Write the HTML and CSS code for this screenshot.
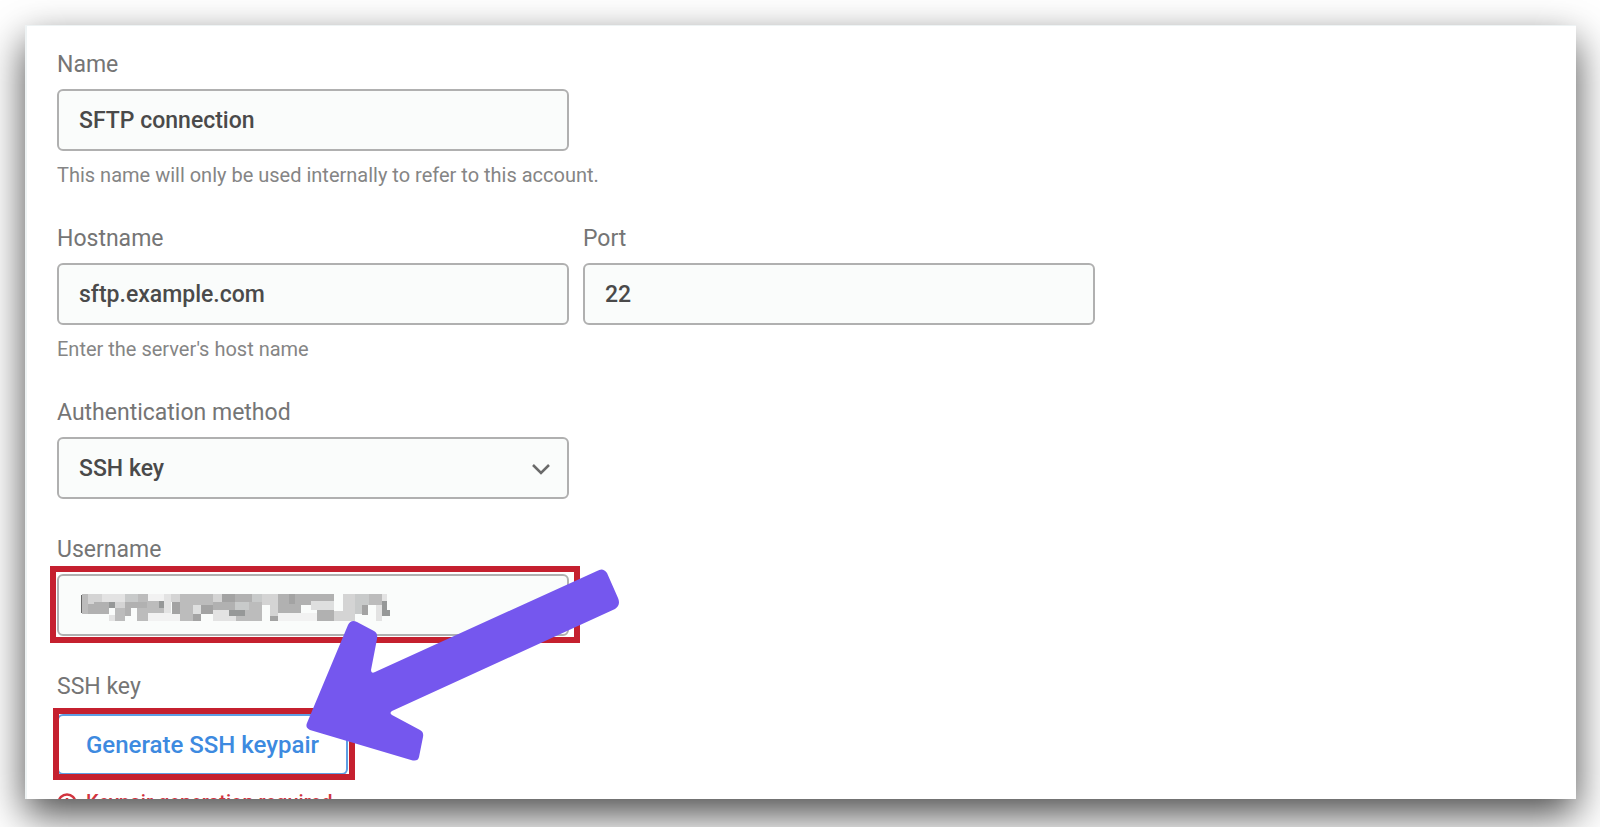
FILE: index.html
```
<!DOCTYPE html>
<html lang="en">
<head>
  <meta charset="utf-8">
  <title>SFTP connection</title>
  <link rel="stylesheet" href="styles.css">
</head>
<body>
  <form class="card">
    <div class="field">
      <label for="name">Name</label>
      <input class="control" id="name" type="text" value="SFTP connection">
      <p class="help">This name will only be used internally to refer to this account.</p>
    </div>
    <div class="row">
      <div class="field">
        <label for="hostname">Hostname</label>
        <input class="control" id="hostname" type="text" value="sftp.example.com">
        <p class="help">Enter the server's host name</p>
      </div>
      <div class="field">
        <label for="port">Port</label>
        <input class="control" id="port" type="text" value="22">
      </div>
    </div>
    <div class="field">
      <label for="auth">Authentication method</label>
      <div class="select">
        <select class="control" id="auth">
          <option>SSH key</option>
        </select>
        <svg class="chevron" width="20" height="12" viewBox="0 0 20 12"><path d="M2 2l8 8 8-8" fill="none" stroke="#6a6a6a" stroke-width="2.5"/></svg>
      </div>
    </div>
    <div class="field">
      <label for="username">Username</label>
      <div class="marked">
        <input class="control" id="username" type="text">
        <!-- pixelated user name -->
        <svg class="redacted" width="310" height="28" viewBox="60 71 930 84" shape-rendering="crispEdges">
          <path fill="#666" d="M62 73h6v56h-6z"/>
          <path fill="#f2f2f2" d="M263 71h50v20h-50zM263 129h97v22h-97zM654 129h117v22H654z"/>
          <path fill="#e3e3e3" d="M125 71h70v24h-70zM147 134h18v19h-18zM313 71h20v58h-20zM458 119h70v34h-70zM947 103h18v50h-18zM965 71h17v20h-17z"/>
          <path fill="#d4d4d4" d="M85 71h40v31H85zM165 95h30v18h-30zM333 71h30v24h-30zM458 71h28v24h-28zM606 71h48v32h-48zM630 103h24v34h-24zM821 122h64v31h-64zM849 71h36v60h-36z"/>
          <path fill="#c8caca" d="M195 71h38v24h-38zM576 71h30v24h-30zM526 95h50v24h-50zM885 71h42v33h-42zM885 104h20v27h-20z"/>
          <path fill="#bcbcbc" d="M67 71h18v61H67zM127 113h20v19h-20zM165 113h30v40h-30zM233 71h30v24h-30zM231 113h32v40h-32zM261 91h52v38h-52zM360 71h98v34h-98zM360 105h64v48h-64zM568 95h38v58h-38zM528 137h40v16h-40zM556 119h12v18h-12zM927 71h38v32h-38z"/>
          <path fill="#b1b1b1" d="M85 102h62v29H85zM103 95h44v8h-44zM195 95h66v19h-66zM195 113h18v23h-18zM458 95h68v24h-68zM526 71h50v24h-50zM654 71h50v58h-50zM704 71h117v22H704zM704 93h18v36h-18zM722 93h30v12h-30zM771 120h50v33h-50z"/>
          <path fill="#a3a3a3" d="M336 95h24v35h-24zM400 131h24v22h-24zM424 105h34v26h-34zM486 71h40v24h-40zM630 137h24v16h-24zM686 71h18v30h-18zM905 104h20v29h-20z"/>
          <path fill="#969898" d="M147 95h18v18h-18zM296 91h16v22h-16zM508 119h48v18h-48zM965 91h17v46h-17zM981 118h9v19h-9z"/>
          <path fill="#dedfdf" d="M400 103h24v28h-24zM752 93h70v27h-70z"/>
        </svg>
      </div>
    </div>
    <div class="field">
      <label for="generate">SSH key</label>
      <div class="marked marked-button">
        <button class="generate" id="generate" type="button">Generate SSH keypair</button>
      </div>
      <p class="error">
        <svg width="20" height="20" viewBox="0 0 20 20"><circle cx="10" cy="10" r="8.5" fill="none" stroke="#d2343f" stroke-width="2.5"/><path d="M10 5v6M10 13v2" stroke="#d2343f" stroke-width="2.5"/></svg>
        Keypair generation required
      </p>
    </div>
    <svg class="arrow" width="320" height="204" viewBox="300 560 320 204">
      <path fill="#7557ee" d="M597 571Q603 567 607 573L618 598Q621 605 615 609L392 711Q389 713 392 715L420 730Q424 732 423 737L419 757Q418 762 411 760L310 730Q305 728 307 723L348 625Q351 619 357 622L374 631Q378 633 377 639L371 670Q371 674 375 672Z"/>
    </svg>
  </form>
</body>
</html>
```
FILE: styles.css
```
* {
  box-sizing: border-box;
}
body {
  margin: 0;
  height: 100vh;
  padding: 25px 24px 28px 25px;
  overflow: hidden;
  background: #fff;
  font-family: Roboto, "Liberation Sans", sans-serif;
}
.card {
  position: relative;
  height: 100%;
  padding: 26px 32px 0;
  overflow: hidden;
  background: #fff;
  box-shadow: 0 16px 38px rgba(0, 0, 0, 0.7), inset 2px 1px #eef3f4;
}
.row {
  display: flex;
  gap: 14px;
}
.field {
  width: 512px;
  margin-bottom: 37px;
}
label {
  display: block;
  margin-bottom: 10px;
  font-size: 23px;
  line-height: 28px;
  color: #757575;
}
.control {
  display: block;
  width: 100%;
  height: 62px;
  padding: 0 20px;
  border: 2px solid #b0b0b0;
  border-radius: 6px;
  background: #fafcfb;
  color: #4a4a4a;
  font: 500 23px Roboto, "Liberation Sans", sans-serif;
  appearance: none;
}
.help {
  margin: 12px 0 0;
  font-size: 20px;
  line-height: 25px;
  white-space: nowrap;
  color: #858585;
}
.select,
.marked {
  position: relative;
}
.chevron {
  position: absolute;
  right: 18px;
  top: 26px;
}
/* red frame around the control */
.marked::after {
  content: "";
  position: absolute;
  top: -8px;
  right: -11px;
  bottom: -7px;
  left: -7px;
  border: 6px solid #c5202f;
}
.redacted {
  position: absolute;
  left: 23px;
  top: 20px;
}
.marked-button {
  width: fit-content;
  margin-top: 13px;
}
.marked-button::after {
  top: -6px;
  right: -7px;
  bottom: -5px;
  left: -4px;
}
.generate {
  display: block;
  height: 61px;
  padding: 0 27px;
  border: 2px solid #5e9fe4;
  border-radius: 6px;
  background: #fff;
  color: #3d8ae0;
  font: 500 24px Roboto, "Liberation Sans", sans-serif;
}
.error {
  display: flex;
  align-items: center;
  gap: 9px;
  margin: 15px 0 0;
  color: #d2343f;
  font-size: 20px;
  font-weight: 500;
  line-height: 25px;
}
.arrow {
  position: absolute;
  left: 275px;
  top: 535px;
}
```
